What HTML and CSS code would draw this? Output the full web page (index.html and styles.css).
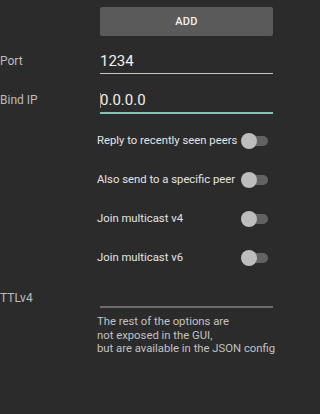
FILE: index.html
```html
<!DOCTYPE html>
<html>
<head>
<meta charset="utf-8">
<link rel="stylesheet" href="styles.css">
</head>
<body>
<div class="form">
  <div class="btn-row"><div class="btn">ADD</div></div>

  <div class="field-row port">
    <div class="label">Port</div>
    <div class="input">1234</div>
  </div>

  <div class="field-row bind">
    <div class="label">Bind IP</div>
    <div class="input focused"><span class="cursor"></span>0.0.0.0</div>
  </div>

  <div class="switches">
    <div class="switch-row"><span class="switch-text">Reply to recently seen peers</span><span class="switch"><span class="track"></span><span class="thumb"></span></span></div>
    <div class="switch-row"><span class="switch-text">Also send to a specific peer</span><span class="switch"><span class="track"></span><span class="thumb"></span></span></div>
    <div class="switch-row"><span class="switch-text">Join multicast v4</span><span class="switch"><span class="track"></span><span class="thumb"></span></span></div>
    <div class="switch-row"><span class="switch-text">Join multicast v6</span><span class="switch"><span class="track"></span><span class="thumb"></span></span></div>
  </div>

  <div class="field-row ttl">
    <div class="label">TTLv4</div>
    <div class="input empty"></div>
  </div>

  <div class="note">The rest of the options are<br>not exposed in the GUI,<br>but are available in the JSON config</div>
</div>
</body>
</html>
```

FILE: styles.css
```css
html, body {
  margin: 0;
  padding: 0;
  background: #2b2b2b;
  font-family: Roboto, "Noto Sans", sans-serif;
  width: 291px;
  height: 414px;
  overflow: hidden;
}

.form {
  padding-top: 7px;
}

.btn-row {
  padding-left: 100px;
}

.btn {
  width: 173px;
  height: 29px;
  background: #5a5a5a;
  border-radius: 2px;
  color: #f2f2f2;
  font-size: 11px;
  font-weight: 500;
  display: flex;
  align-items: center;
  justify-content: center;
  letter-spacing: 0.2px;
}

.field-row {
  display: grid;
  grid-template-columns: 100px 173px;
  align-items: start;
}

.label {
  font-size: 12px;
  line-height: 20px;
  color: #bcbcbc;
}

.input {
  font-size: 15px;
  line-height: 20px;
  color: #f0f0f0;
  padding-bottom: 2px;
  border-bottom: 1px solid #c4c4c4;
  position: relative;
}

.port {
  margin-top: 15px;
}

.bind {
  margin-top: 16px;
}

.input.focused {
  border-bottom: 2px solid #7fc4b4;
}

.cursor {
  position: absolute;
  left: 0;
  top: 3px;
  width: 1px;
  height: 15px;
  background: #9a9a9a;
}

.switches {
  margin-top: 7px;
}

.switch-row {
  height: 39px;
  margin-left: 97px;
  width: 171px;
  display: flex;
  align-items: center;
  justify-content: space-between;
  font-size: 11.3px;
  color: #e4e4e4;
}

.switch-text {
  white-space: nowrap;
}

.switch {
  position: relative;
  width: 27px;
  height: 16px;
  flex: none;
}

.track {
  position: absolute;
  left: 3px;
  right: 0;
  top: 3px;
  height: 10px;
  border-radius: 5px;
  background: #626262;
}

.thumb {
  position: absolute;
  left: 0;
  top: 0;
  width: 16px;
  height: 16px;
  border-radius: 50%;
  background: #bdbdbd;
}

.ttl {
  margin-top: 11px;
}

.input.empty {
  height: 18px;
  padding-bottom: 0;
  border-bottom: 2px solid #6c6c6c;
}

.note {
  margin-top: 7px;
  margin-left: 97px;
  font-size: 11.3px;
  line-height: 13.5px;
  color: #c2c2c2;
  white-space: nowrap;
}
```
